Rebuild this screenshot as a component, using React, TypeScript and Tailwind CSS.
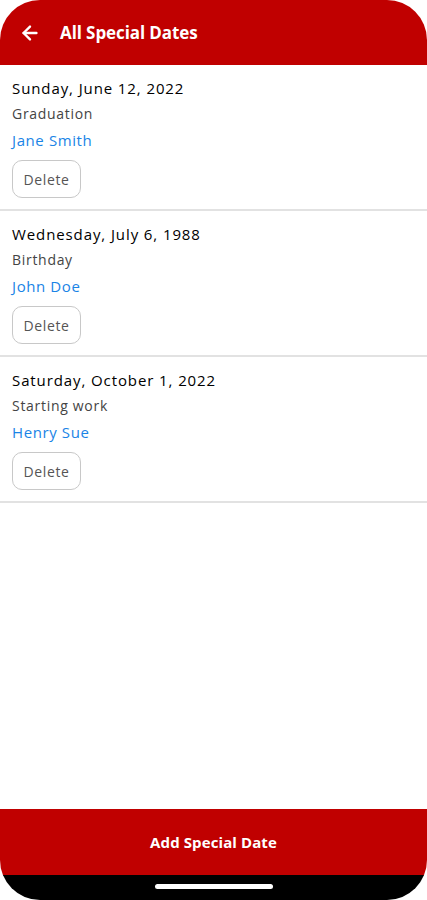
import { ArrowLeft } from 'lucide-react';

const DATES = [
  { date: 'Sunday, June 12, 2022', label: 'Graduation', name: 'Jane Smith' },
  { date: 'Wednesday, July 6, 1988', label: 'Birthday', name: 'John Doe' },
  { date: 'Saturday, October 1, 2022', label: 'Starting work', name: 'Henry Sue' },
];

export default function App() {
  return (
    <div className="h-[900px] w-[427px] bg-white" style={{ fontFamily: '"Open Sans", "Noto Sans", sans-serif' }}>
      <div className="flex h-full flex-col overflow-hidden rounded-[40px] bg-white">
        {/* Header */}
        <div className="flex h-[65px] shrink-0 items-center bg-[#c00000] pl-[19px]">
          <ArrowLeft className="h-[22px] w-[22px] text-white" strokeWidth={2.6} />
          <h1 className="ml-[19px] text-[17px] font-bold tracking-[-0.1px] text-white">All Special Dates</h1>
        </div>

        {/* List */}
        <div className="flex-1">
          {DATES.map(d => (
            <div key={d.name} className="h-[146px] border-b-2 border-[#e2e2e2] px-3 pt-[13px]">
              <div className="text-[15px] leading-5 tracking-[0.9px] text-black">{d.date}</div>
              <div className="mt-[6px] text-[14px] leading-5 tracking-[0.7px] text-[#444]">{d.label}</div>
              <div className="mt-[6px] text-[15px] font-medium leading-5 tracking-[0.6px] text-[#1a84e6]">{d.name}</div>
              <button className="mt-[10px] flex h-[38px] w-[69px] items-center justify-center rounded-[10px] border border-[#c8c8c8] text-[14px] tracking-[0.6px] text-[#555]">
                Delete
              </button>
            </div>
          ))}
        </div>

        {/* Bottom button */}
        <div className="flex h-[66px] shrink-0 items-center justify-center bg-[#c00000]">
          <span className="text-[15px] font-bold tracking-[0.1px] text-white">Add Special Date</span>
        </div>
        <div className="flex h-[25px] shrink-0 items-start justify-center bg-black pt-[9px]">
          <div className="h-[5px] w-[118px] rounded-full bg-white" />
        </div>
      </div>
    </div>
  );
}
